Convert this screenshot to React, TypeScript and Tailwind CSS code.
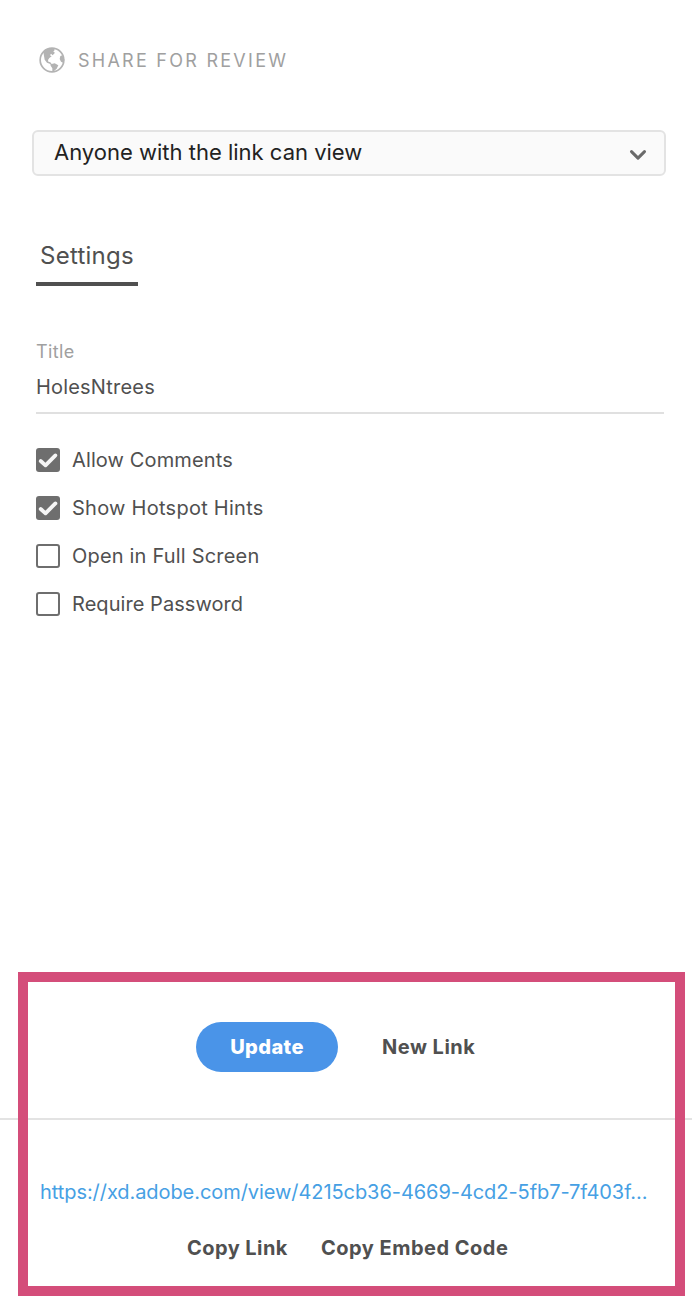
import { useState } from "react";

function GlobeIcon() {
  return (
    <svg className="size-[26px] shrink-0" viewBox="0 0 78 78" fill="none" aria-hidden="true">
      <circle cx="39" cy="39" r="35.5" stroke="#b3b3b3" strokeWidth="5" />
      <path
        fill="#b3b3b3"
        d="M13 14 L24 6 L45 4 L47 9 L43 14 L48 17 L41 25 L36 20 L33 25 L38 28 L31 33 L27 39 L28 44 L34 46 L38 51 L47 49 L58 55 L53 65 L45 72 L40 74 L40 64 L35 56 L34 51 L24 47 L17 38 L15 27 Z"
      />
      <path fill="#b3b3b3" d="M64 27 L70 25 L76 38 L74 48 L66 44 L62 36 Z" />
    </svg>
  );
}

type Option = { label: string; initial: boolean; tracking: string };

function Checkbox({ label, initial, tracking }: Option) {
  const [checked, setChecked] = useState(initial);
  return (
    <button
      type="button"
      role="checkbox"
      aria-checked={checked}
      onClick={() => setChecked(!checked)}
      className="flex h-6 items-center gap-3 text-left"
    >
      <span
        className={
          checked
            ? "flex size-6 items-center justify-center rounded-[3px] bg-[#6e6e6e]"
            : "size-6 rounded-[3px] border-2 border-[#6e6e6e] bg-white"
        }
      >
        {checked && (
          <svg className="size-6" viewBox="0 0 24 24" fill="none" aria-hidden="true">
            <path d="M4.7 13 L9.5 17.3 L19.4 7.4" stroke="#f5f5f5" strokeWidth="3.8" strokeLinecap="round" strokeLinejoin="round" />
          </svg>
        )}
      </span>
      <span className={`text-[20px] leading-6 text-[#505050] ${tracking}`}>{label}</span>
    </button>
  );
}

const options: Option[] = [
  { label: "Allow Comments", initial: true, tracking: "tracking-[0.12px]" },
  { label: "Show Hotspot Hints", initial: true, tracking: "tracking-[0.26px]" },
  { label: "Open in Full Screen", initial: false, tracking: "tracking-[0.19px]" },
  { label: "Require Password", initial: false, tracking: "tracking-[0.06px]" },
];

export default function App() {
  return (
    <main className="relative flex h-[1304px] w-[692px] flex-col overflow-hidden bg-white font-['Inter',sans-serif] text-[#505050]">
      <header className="flex items-center gap-[13px] pt-[47px] pl-[39px]">
        <GlobeIcon />
        <h1 className="pt-[2px] text-[18px] leading-6 tracking-[2.26px] text-[#a0a0a0]">SHARE FOR REVIEW</h1>
      </header>

      <button
        type="button"
        className="mt-[57px] ml-8 flex h-[46px] w-[634px] items-center justify-between rounded-[6px] border-2 border-[#e3e3e3] bg-[#fafafa] pr-[17px] pl-5"
      >
        <span className="pb-[2px] text-[22px] leading-10 text-[#222222]">Anyone with the link can view</span>
        <svg className="mt-[3px] h-3 w-[18px]" viewBox="0 0 18 12" fill="none" aria-hidden="true">
          <path d="M2.5 2.6 L9 9.1 L15.5 2.6" stroke="#6a6a6a" strokeWidth="3" strokeLinecap="round" strokeLinejoin="round" />
        </svg>
      </button>

      <nav className="mt-[60px] ml-9 flex">
        <div className="w-[102px] border-b-4 border-[#505050] pb-[6px] pl-1 text-[24px] leading-10 tracking-[0.25px]">Settings</div>
      </nav>

      <section className="mx-9 mt-[54px] flex w-[628px] flex-col border-b-2 border-[#e0e0e0] pb-[13px]">
        <label className="text-[18px] leading-6 tracking-[0.4px] text-[#a0a0a0]">Title</label>
        <span className="mt-[11px] text-[20px] leading-6 tracking-[0.18px]">HolesNtrees</span>
      </section>

      <section className="mt-[34px] ml-9 flex flex-col items-start gap-6">
        {options.map((o) => (
          <Checkbox key={o.label} {...o} />
        ))}
      </section>

      <section className="mt-auto flex h-[98px] items-start border-b-2 border-[#e3e3e3] pl-[196px]">
        <button type="button" className="h-[50px] w-[142px] rounded-full bg-[#4a94e8] text-[20px] font-extrabold tracking-[0.4px] text-white">
          Update
        </button>
        <button type="button" className="ml-11 h-[50px] text-[20px] font-bold tracking-[0.5px]">
          New Link
        </button>
      </section>

      <footer className="flex h-[184px] flex-col pt-[60px]">
        <a href="#link" className="ml-10 text-[20px] leading-6 tracking-[-0.065px] whitespace-nowrap text-[#46a0e4]">
          https://xd.adobe.com/view/4215cb36-4669-4cd2-5fb7-7f403f...
        </a>
        <div className="mt-8 ml-[187px] flex gap-[33px] text-[20px] leading-6 font-bold">
          <button type="button" className="tracking-[0.45px]">Copy Link</button>
          <button type="button" className="tracking-[0.5px]">Copy Embed Code</button>
        </div>
      </footer>

      <div className="pointer-events-none absolute top-[972px] left-[18px] h-[324px] w-[667px] border-[10px] border-[#d44d7a]" />
    </main>
  );
}
